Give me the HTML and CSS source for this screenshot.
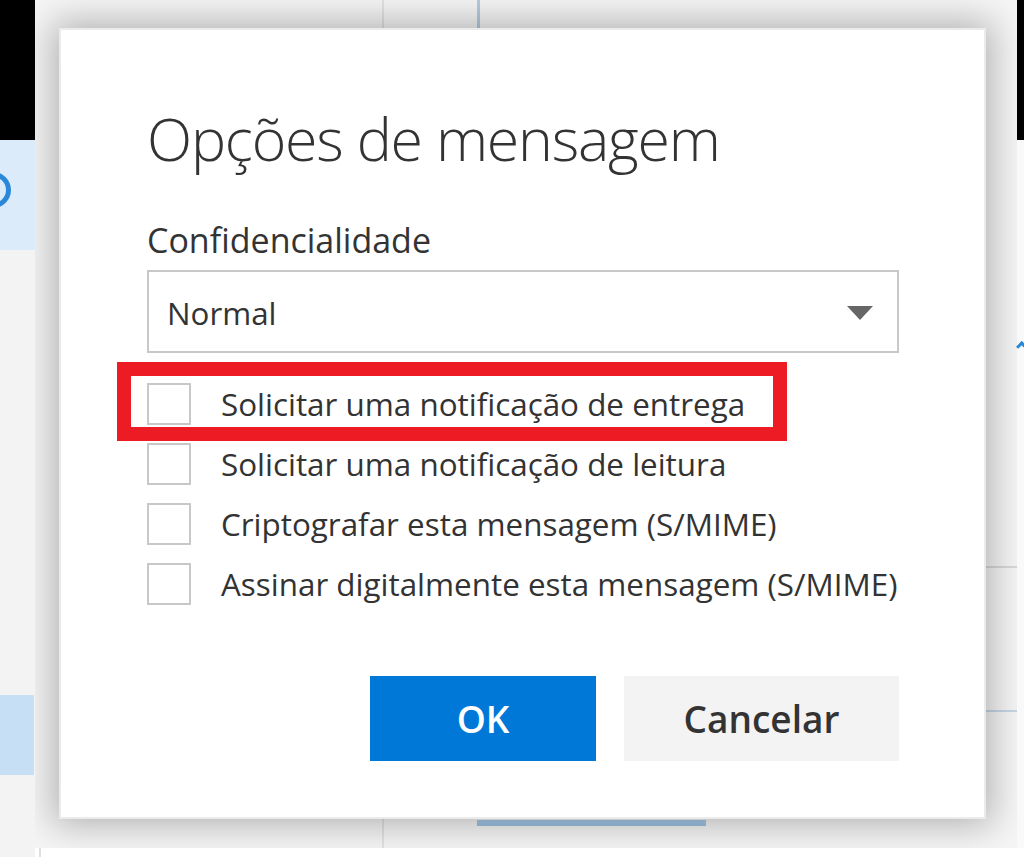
FILE: index.html
```html
<!DOCTYPE html>
<html lang="pt">
<head>
    <meta charset="UTF-8">
    <meta name="viewport" content="width=device-width, initial-scale=1.0">
    <title>Opções de mensagem</title>
    <link rel="stylesheet" href="styles.css">
</head>
<body>
    <div class="app">
        <div class="rail">
            <div class="rail-head"></div>
            <div class="rail-tab"><span class="rail-ring"></span></div>
            <div class="rail-list"><div class="rail-pick"></div></div>
        </div>

        <div class="main">
            <div class="main-row">
                <div class="stage">
                    <div class="dialog">
                        <h1 class="dialog-title">Opções de mensagem</h1>

                        <div class="field-label">Confidencialidade</div>
                        <div class="select">
                            <span>Normal</span>
                            <span class="select-arrow"></span>
                        </div>

                        <ul class="options">
                            <li class="option"><span class="box"></span><span>Solicitar uma notificação de entrega</span></li>
                            <li class="option"><span class="box"></span><span>Solicitar uma notificação de leitura</span></li>
                            <li class="option"><span class="box"></span><span>Criptografar esta mensagem (S/MIME)</span></li>
                            <li class="option"><span class="box"></span><span>Assinar digitalmente esta mensagem (S/MIME)</span></li>
                        </ul>

                        <div class="actions">
                            <button class="btn btn-primary">OK</button>
                            <button class="btn">Cancelar</button>
                        </div>

                        <div class="callout"></div>
                    </div>
                </div>
                <div class="edge">
                    <div class="edge-head"></div>
                    <div class="edge-body"><span class="edge-mark"></span></div>
                </div>
            </div>
            <div class="main-foot"></div>
        </div>
    </div>
</body>
</html>
```

FILE: styles.css
```css
* {
    box-sizing: border-box;
}
body {
    margin: 0;
    background-color: #fff;
    font-family: "Open Sans", "Noto Sans", sans-serif;
    color: #333;
}
.app {
    display: flex;
    height: 857px;
    overflow: hidden;
}

/* left rail of the page behind the dialog */
.rail {
    width: 36px;
    display: flex;
    flex-direction: column;
    background-color: #f3f3f3;
}
.rail-head {
    height: 140px;
    background-color: #000;
}
.rail-tab {
    height: 110px;
    padding-top: 32px;
    background-color: #dcebf9;
    overflow: hidden;
}
.rail-ring {
    display: block;
    width: 36px;
    height: 36px;
    margin-left: -25px;
    border: 5px solid #2b88d8;
    border-radius: 50%;
}
.rail-list {
    flex: 1;
    padding-top: 445px;
}
.rail-pick {
    width: 34px;
    height: 80px;
    background-color: #c7dff4;
}

.main {
    flex: 1;
    display: flex;
    flex-direction: column;
}
.main-row {
    display: flex;
    height: 848px;
}
.main-foot {
    flex: 1;
    margin-left: 4px;
    border-left: 2px solid #e0e0e0;
    background-color: #fff;
}

.stage {
    width: 982px;
    padding: 28px 0 0 24px;
    overflow: hidden;
    background:
        linear-gradient(#b5cbe0, #b5cbe0) 442px 0 / 3px 30px no-repeat,
        linear-gradient(#e2e2e2, #e2e2e2) 347px 0 / 2px 100% no-repeat,
        linear-gradient(#d8d8d8, #d8d8d8) 950px 566px / 32px 2px no-repeat,
        linear-gradient(#c6d6e6, #c6d6e6) 950px 710px / 32px 2px no-repeat,
        #f5f5f5;
}
.edge {
    flex: 1;
    display: flex;
    flex-direction: column;
}
.edge-head {
    height: 140px;
    background-color: #000;
}
.edge-body {
    flex: 1;
    padding-top: 202px;
    background-color: #f7f9fb;
}
.edge-mark {
    display: block;
    width: 6px;
    height: 8px;
    margin-left: 1px;
    border-top: 3px solid #2b88d8;
    border-left: 3px solid #2b88d8;
    transform: rotate(45deg);
}

/* dialog */
.dialog {
    position: relative;
    width: 927px;
    height: 791px;
    padding: 70px 85px 0 86px;
    background-color: #fff;
    border: 2px solid #ebebeb;
    box-shadow: 0 0 34px 6px rgba(0, 0, 0, 0.28);
}
.dialog::after {
    content: "";
    position: absolute;
    left: 416px;
    bottom: -9px;
    width: 229px;
    height: 6px;
    background-color: #88a8c4;
}
.dialog-title {
    margin: 0;
    font-size: 59px;
    font-weight: 300;
    letter-spacing: -1.2px;
    line-height: 76px;
    color: #333;
}
.field-label {
    margin-top: 44px;
    font-size: 34px;
    line-height: 40px;
}
.select {
    display: flex;
    align-items: center;
    justify-content: space-between;
    height: 83px;
    margin-top: 10px;
    padding: 2px 24px 0 18px;
    border: 2px solid #c8c8c8;
    font-size: 31.3px;
    line-height: 40px;
}
.select-arrow {
    width: 0;
    height: 0;
    border-left: 13px solid transparent;
    border-right: 13px solid transparent;
    border-top: 14px solid #666;
}
.options {
    list-style: none;
    margin: 30px 0 0;
    padding: 0;
    display: flex;
    flex-direction: column;
    gap: 18px;
}
.option {
    display: flex;
    align-items: center;
    gap: 30px;
    height: 42px;
    font-size: 31.4px;
    line-height: 40px;
    white-space: nowrap;
}
.box {
    flex: none;
    width: 44px;
    height: 42px;
    border: 2px solid #c8c8c8;
    background-color: #fff;
}
.actions {
    display: flex;
    justify-content: flex-end;
    gap: 28px;
    margin-top: 71px;
}
.btn {
    height: 85px;
    width: 275px;
    border: none;
    background-color: #f3f3f3;
    color: #333;
    font-family: "Open Sans", "Noto Sans", sans-serif;
    font-size: 37px;
    font-weight: 600;
}
.btn-primary {
    width: 226px;
    background-color: #0078d7;
    color: #fff;
}

/* red highlight drawn over the first option */
.callout {
    position: absolute;
    left: 56px;
    top: 332px;
    width: 670px;
    height: 79px;
    border: 14px solid #ed1c24;
}
```
